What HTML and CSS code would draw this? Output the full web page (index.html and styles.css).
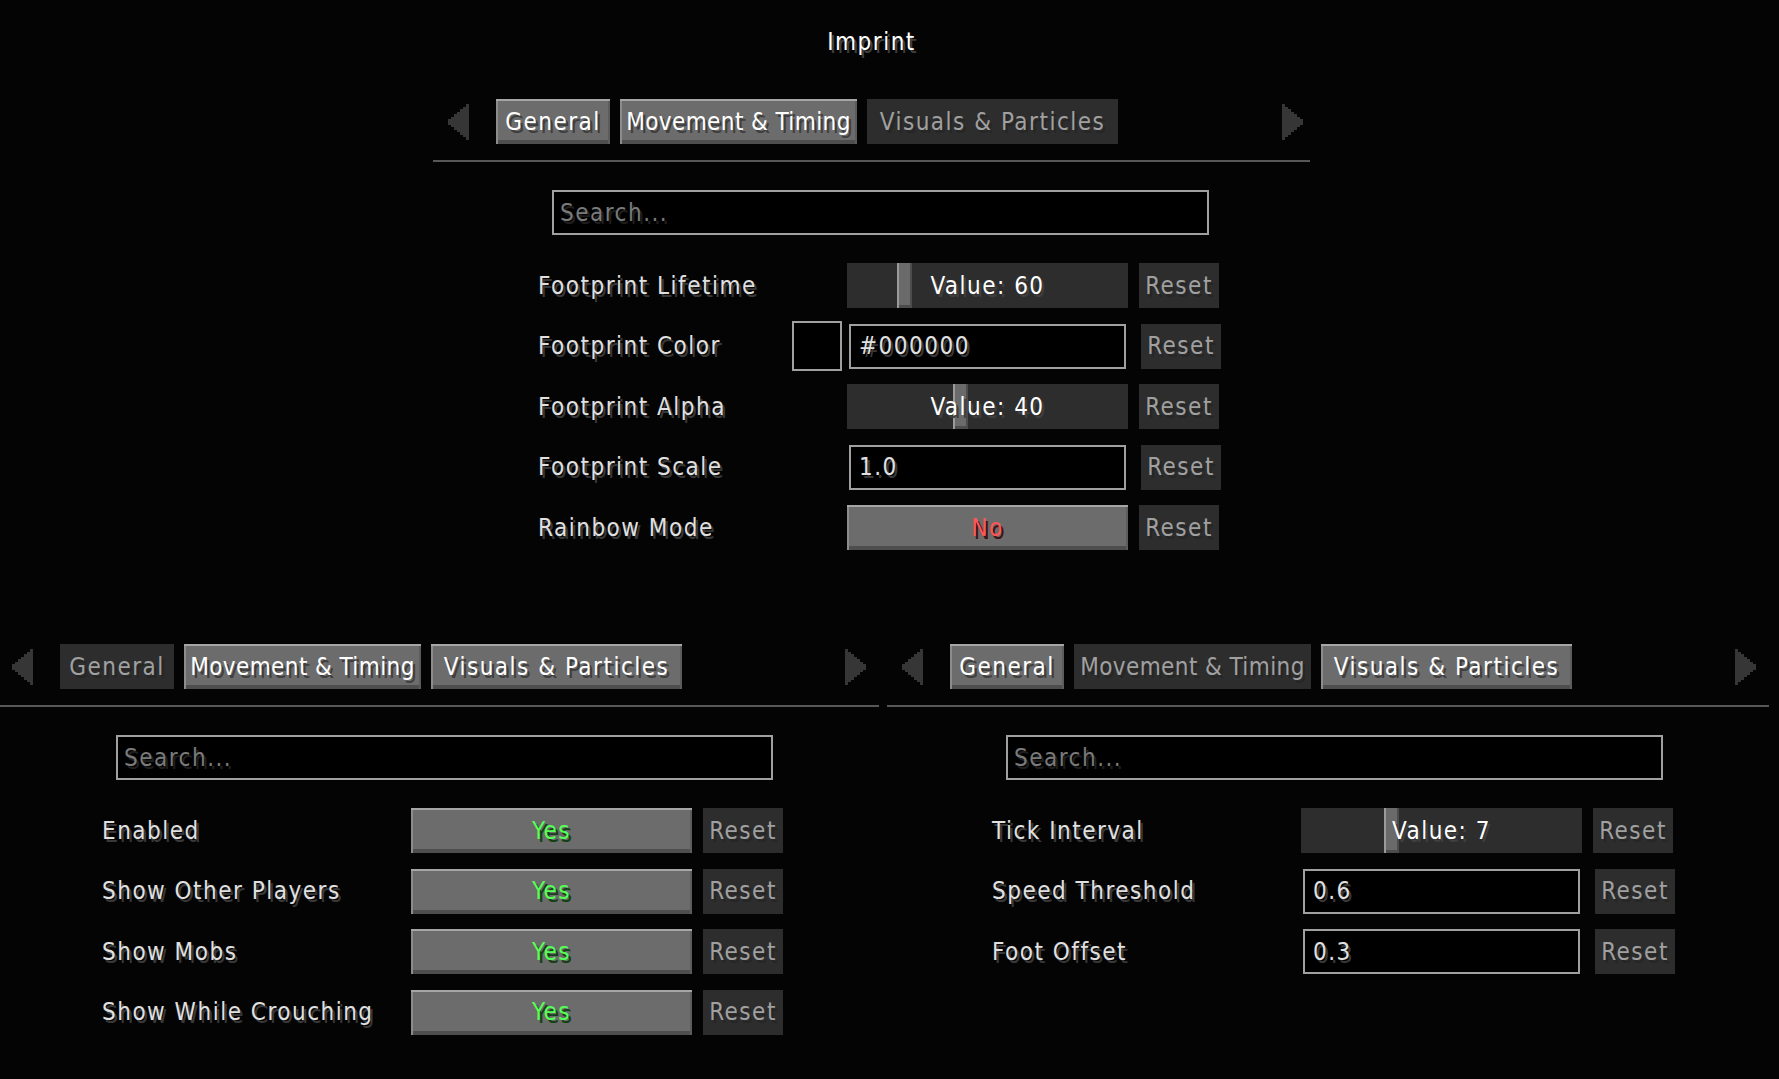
FILE: index.html
```html
<!DOCTYPE html>
<html lang="en">
<head>
<meta charset="utf-8">
<title>Imprint</title>
<link rel="stylesheet" href="styles.css">
</head>
<body>
  <div class="top">
    <h1 class="title">Imprint</h1>

    <section class="panel">
      <nav class="tabbar">
        <svg class="arrow" viewBox="0 0 7 14" preserveAspectRatio="none"><polygon points="7,0 7,14 6,14 6,13 5,13 5,12 4,12 4,11 3,11 3,10 2,10 2,9 1,9 1,8 0,8 0,6 1,6 1,5 2,5 2,4 3,4 3,3 4,3 4,2 5,2 5,1 6,1 6,0"/></svg>
        <div class="tabs">
          <span class="tab tab-general btn-on">General</span>
          <span class="tab tab-movement btn-on">Movement &amp; Timing</span>
          <span class="tab tab-visuals btn-off">Visuals &amp; Particles</span>
        </div>
        <svg class="arrow arrow-right" viewBox="0 0 7 14" preserveAspectRatio="none"><polygon points="0,0 0,14 1,14 1,13 2,13 2,12 3,12 3,11 4,11 4,10 5,10 5,9 6,9 6,8 7,8 7,6 6,6 6,5 5,5 5,4 4,4 4,3 3,3 3,2 2,2 2,1 1,1 1,0"/></svg>
      </nav>
      <div class="divider"></div>
      <div class="search">Search...</div>
      <div class="rows">
        <div class="row">
          <div class="label-cell"><span class="label">Footprint Lifetime</span></div>
          <div class="control slider"><span class="handle" style="left:50px"></span><span class="slider-text">Value: 60</span></div>
          <span class="btn btn-off reset">Reset</span>
        </div>
        <div class="row">
          <div class="label-cell"><span class="label">Footprint Color</span><span class="swatch"></span></div>
          <div class="control field">#000000</div>
          <span class="btn btn-off reset">Reset</span>
        </div>
        <div class="row">
          <div class="label-cell"><span class="label">Footprint Alpha</span></div>
          <div class="control slider"><span class="handle" style="left:106px"></span><span class="slider-text">Value: 40</span></div>
          <span class="btn btn-off reset">Reset</span>
        </div>
        <div class="row">
          <div class="label-cell"><span class="label">Footprint Scale</span></div>
          <div class="control field">1.0</div>
          <span class="btn btn-off reset">Reset</span>
        </div>
        <div class="row">
          <div class="label-cell"><span class="label">Rainbow Mode</span></div>
          <span class="control btn btn-on no">No</span>
          <span class="btn btn-off reset">Reset</span>
        </div>
      </div>
    </section>
  </div>

  <div class="bottom">
    <section class="panel">
      <nav class="tabbar">
        <svg class="arrow" viewBox="0 0 7 14" preserveAspectRatio="none"><polygon points="7,0 7,14 6,14 6,13 5,13 5,12 4,12 4,11 3,11 3,10 2,10 2,9 1,9 1,8 0,8 0,6 1,6 1,5 2,5 2,4 3,4 3,3 4,3 4,2 5,2 5,1 6,1 6,0"/></svg>
        <div class="tabs">
          <span class="tab tab-general btn-off">General</span>
          <span class="tab tab-movement btn-on">Movement &amp; Timing</span>
          <span class="tab tab-visuals btn-on">Visuals &amp; Particles</span>
        </div>
        <svg class="arrow arrow-right" viewBox="0 0 7 14" preserveAspectRatio="none"><polygon points="0,0 0,14 1,14 1,13 2,13 2,12 3,12 3,11 4,11 4,10 5,10 5,9 6,9 6,8 7,8 7,6 6,6 6,5 5,5 5,4 4,4 4,3 3,3 3,2 2,2 2,1 1,1 1,0"/></svg>
      </nav>
      <div class="divider"></div>
      <div class="search">Search...</div>
      <div class="rows">
        <div class="row">
          <div class="label-cell"><span class="label">Enabled</span></div>
          <span class="control btn btn-on yes">Yes</span>
          <span class="btn btn-off reset">Reset</span>
        </div>
        <div class="row">
          <div class="label-cell"><span class="label">Show Other Players</span></div>
          <span class="control btn btn-on yes">Yes</span>
          <span class="btn btn-off reset">Reset</span>
        </div>
        <div class="row">
          <div class="label-cell"><span class="label">Show Mobs</span></div>
          <span class="control btn btn-on yes">Yes</span>
          <span class="btn btn-off reset">Reset</span>
        </div>
        <div class="row">
          <div class="label-cell"><span class="label">Show While Crouching</span></div>
          <span class="control btn btn-on yes">Yes</span>
          <span class="btn btn-off reset">Reset</span>
        </div>
      </div>
    </section>

    <section class="panel">
      <nav class="tabbar">
        <svg class="arrow" viewBox="0 0 7 14" preserveAspectRatio="none"><polygon points="7,0 7,14 6,14 6,13 5,13 5,12 4,12 4,11 3,11 3,10 2,10 2,9 1,9 1,8 0,8 0,6 1,6 1,5 2,5 2,4 3,4 3,3 4,3 4,2 5,2 5,1 6,1 6,0"/></svg>
        <div class="tabs">
          <span class="tab tab-general btn-on">General</span>
          <span class="tab tab-movement btn-off">Movement &amp; Timing</span>
          <span class="tab tab-visuals btn-on">Visuals &amp; Particles</span>
        </div>
        <svg class="arrow arrow-right" viewBox="0 0 7 14" preserveAspectRatio="none"><polygon points="0,0 0,14 1,14 1,13 2,13 2,12 3,12 3,11 4,11 4,10 5,10 5,9 6,9 6,8 7,8 7,6 6,6 6,5 5,5 5,4 4,4 4,3 3,3 3,2 2,2 2,1 1,1 1,0"/></svg>
      </nav>
      <div class="divider"></div>
      <div class="search">Search...</div>
      <div class="rows">
        <div class="row">
          <div class="label-cell"><span class="label">Tick Interval</span></div>
          <div class="control slider"><span class="handle" style="left:83px"></span><span class="slider-text">Value: 7</span></div>
          <span class="btn btn-off reset">Reset</span>
        </div>
        <div class="row">
          <div class="label-cell"><span class="label">Speed Threshold</span></div>
          <div class="control field">0.6</div>
          <span class="btn btn-off reset">Reset</span>
        </div>
        <div class="row">
          <div class="label-cell"><span class="label">Foot Offset</span></div>
          <div class="control field">0.3</div>
          <span class="btn btn-off reset">Reset</span>
        </div>
      </div>
    </section>
  </div>
</body>
</html>
```

FILE: styles.css
```css
html, body {
  margin: 0;
  padding: 0;
}

body {
  width: 1779px;
  height: 1079px;
  overflow: hidden;
  background: #040404;
  color: #e0e0e0;
  font-family: "DejaVu Sans Condensed", "DejaVu Sans", sans-serif;
  font-stretch: condensed;
  font-size: 24px;
  line-height: 24px;
  letter-spacing: 1.5px;
}

/* ---------- layout ---------- */

.top {
  width: 877px;
  margin-left: 433px;
}

.title {
  margin: 0;
  padding-top: 30px;
  height: 24px;
  font-size: 24px;
  font-weight: normal;
  text-align: center;
  color: #ffffff;
  text-shadow: 2.5px 2.5px 0 #3f3f3f;
}

.top .panel {
  margin-top: 45px;
}

.bottom {
  display: flex;
  gap: 8px;
  margin-left: -3px;
  margin-top: 94px;
}

.bottom .panel {
  width: 882px;
  flex: none;
}

/* ---------- tab bar ---------- */

.tabbar {
  display: flex;
  align-items: center;
  height: 45px;
  padding: 0 7px 0 15px;
}

.bottom .tabbar {
  padding-right: 13px;
}

.arrow {
  width: 21px;
  height: 36px;
  flex: none;
  fill: #363636;
  shape-rendering: crispEdges;
}

.arrow-right {
  margin-left: auto;
}

.tabs {
  display: flex;
  gap: 10px;
  margin-left: 27px;
}

.tab-general {
  width: 114px;
}

.tab-movement {
  width: 237px;
  letter-spacing: 0.4px;
}

.tab-visuals {
  width: 251px;
}

/* ---------- buttons ---------- */

.tab,
.btn {
  height: 45px;
  box-sizing: border-box;
  display: flex;
  align-items: center;
  justify-content: center;
  white-space: nowrap;
}

.btn-on {
  background: #6c6c6c;
  color: #ffffff;
  text-shadow: 2.5px 2.5px 0 #3f3f3f;
  box-shadow:
    inset 0 2px 0 #a6a6a6,
    inset 2px 0 0 #8c8c8c,
    inset -2px 0 0 #5c5c5c,
    inset 0 -4px 0 #4e4e4e;
}

.btn-off {
  background: #2d2d2d;
  color: #a0a0a0;
  text-shadow: 2.5px 2.5px 0 #262626;
}

.yes {
  color: #55ff55;
  text-shadow: 2.5px 2.5px 0 #153f15;
}

.no {
  color: #ff5555;
  text-shadow: 2.5px 2.5px 0 #3f1515;
}

.reset {
  width: 80px;
  margin-left: 11px;
  flex: none;
}

/* ---------- panel body ---------- */

.divider {
  height: 2px;
  margin-top: 16px;
  background: #575757;
}

.search {
  width: 657px;
  height: 45px;
  box-sizing: border-box;
  margin: 28px 0 0 119px;
  padding-left: 6px;
  display: flex;
  align-items: center;
  border: 2px solid #a0a0a0;
  background: #000000;
  color: #7a7a7a;
  text-shadow: 2.5px 2.5px 0 #1e1e1e;
}

.rows {
  display: flex;
  flex-direction: column;
  gap: 15.5px;
  margin: 28px 0 0 105px;
}

.row {
  display: flex;
  align-items: center;
  height: 45px;
}

.label-cell {
  width: 309px;
  flex: none;
  display: flex;
  align-items: center;
  justify-content: space-between;
}

.label {
  color: #e0e0e0;
  text-shadow: 2.5px 2.5px 0 #383838;
  white-space: nowrap;
}

.swatch {
  width: 50px;
  height: 50px;
  box-sizing: border-box;
  margin-right: 5px;
  border: 2px solid #a0a0a0;
  background: #000000;
}

.control {
  width: 281px;
  flex: none;
}

/* slider */
.slider {
  position: relative;
  height: 45px;
  display: flex;
  align-items: center;
  justify-content: center;
  background: #2d2d2d;
  color: #ffffff;
  text-shadow: 2.5px 2.5px 0 #3f3f3f;
}

.handle {
  position: absolute;
  top: 0;
  width: 15px;
  height: 45px;
  background: #6a6a6a;
  box-shadow:
    inset 2px 0 0 #9a9a9a,
    inset -2px 0 0 #4c4c4c,
    inset 0 -3px 0 #4c4c4c;
}

.slider-text {
  position: relative;
}

/* text field */
.field {
  width: 277px;
  height: 45px;
  box-sizing: border-box;
  margin: 0 2px;
  padding-left: 8px;
  display: flex;
  align-items: center;
  border: 2px solid #a0a0a0;
  background: #000000;
  color: #e0e0e0;
  text-shadow: 2.5px 2.5px 0 #383838;
}

.field + .reset {
  margin-left: 13px;
}
```
